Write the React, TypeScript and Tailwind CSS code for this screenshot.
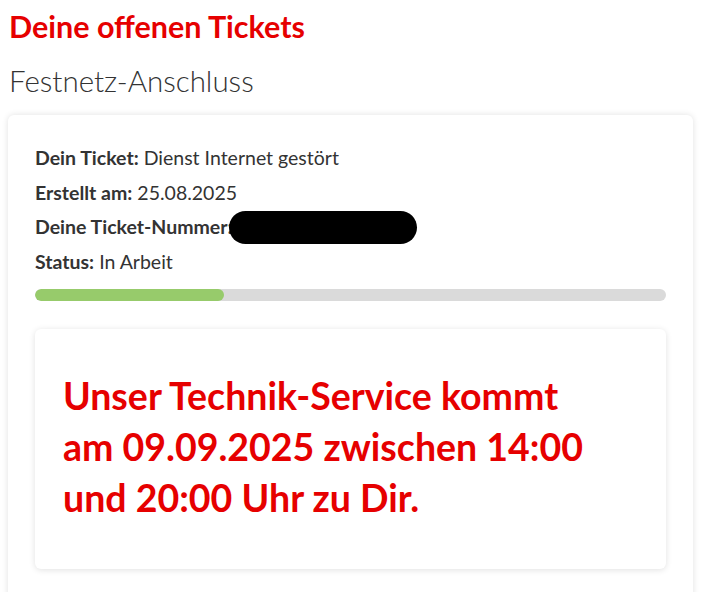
import React from 'react'

const font = { fontFamily: 'Lato, "Open Sans", sans-serif' }

const Row = ({ label, value }: { label: string; value: string }) => (
  <p className="text-[19.5px] leading-[34.5px] text-[#333]">
    <span className="font-bold">{label}</span> {value}
  </p>
)

const App = () => {
  return (
    <div className="min-h-screen bg-white pl-[9px] pr-[10px] pt-[8px] font-['Lato',sans-serif]">
      <h1 className="text-[30.5px] font-bold leading-[36px] text-[#e60000]">Deine offenen Tickets</h1>
      <h2 className="mt-[20px] text-[29.5px] font-light leading-[34px] text-[#333]">Festnetz-Anschluss</h2>

      {/* Ticket card */}
      <div className="mt-[17px] -ml-[1px] rounded-[6px] bg-white px-[27px] pt-[26px] pb-[40px] shadow-[0_0_6px_rgba(0,0,0,0.12)]">
        <Row label="Dein Ticket:" value="Dienst Internet gestört" />
        <Row label="Erstellt am:" value="25.08.2025" />
        <p className="flex items-center text-[19.5px] leading-[34.5px] text-[#333]">
          <span className="font-bold">Deine Ticket-Nummer:</span>
          <span className="ml-[-4px] inline-block h-[33px] w-[188px] rounded-[18px] bg-black" />
        </p>
        <Row label="Status:" value="In Arbeit" />

        <div className="mt-[10px] h-[12px] w-full overflow-hidden rounded-full bg-[#dadada]">
          <div className="h-full w-[30%] rounded-full bg-[#97cb6b]" />
        </div>

        {/* Appointment box */}
        <div className="mt-[28px] rounded-[6px] bg-white px-[28px] pt-[41px] pb-[46px] shadow-[0_1px_6px_rgba(0,0,0,0.12)]">
          <p className="text-[37.5px] font-bold leading-[51px] text-[#e60000]" style={font}>
            Unser Technik-Service kommt
            <br />
            am 09.09.2025 zwischen 14:00
            <br />
            und 20:00 Uhr zu Dir.
          </p>
        </div>
      </div>
    </div>
  )
}

export default App
